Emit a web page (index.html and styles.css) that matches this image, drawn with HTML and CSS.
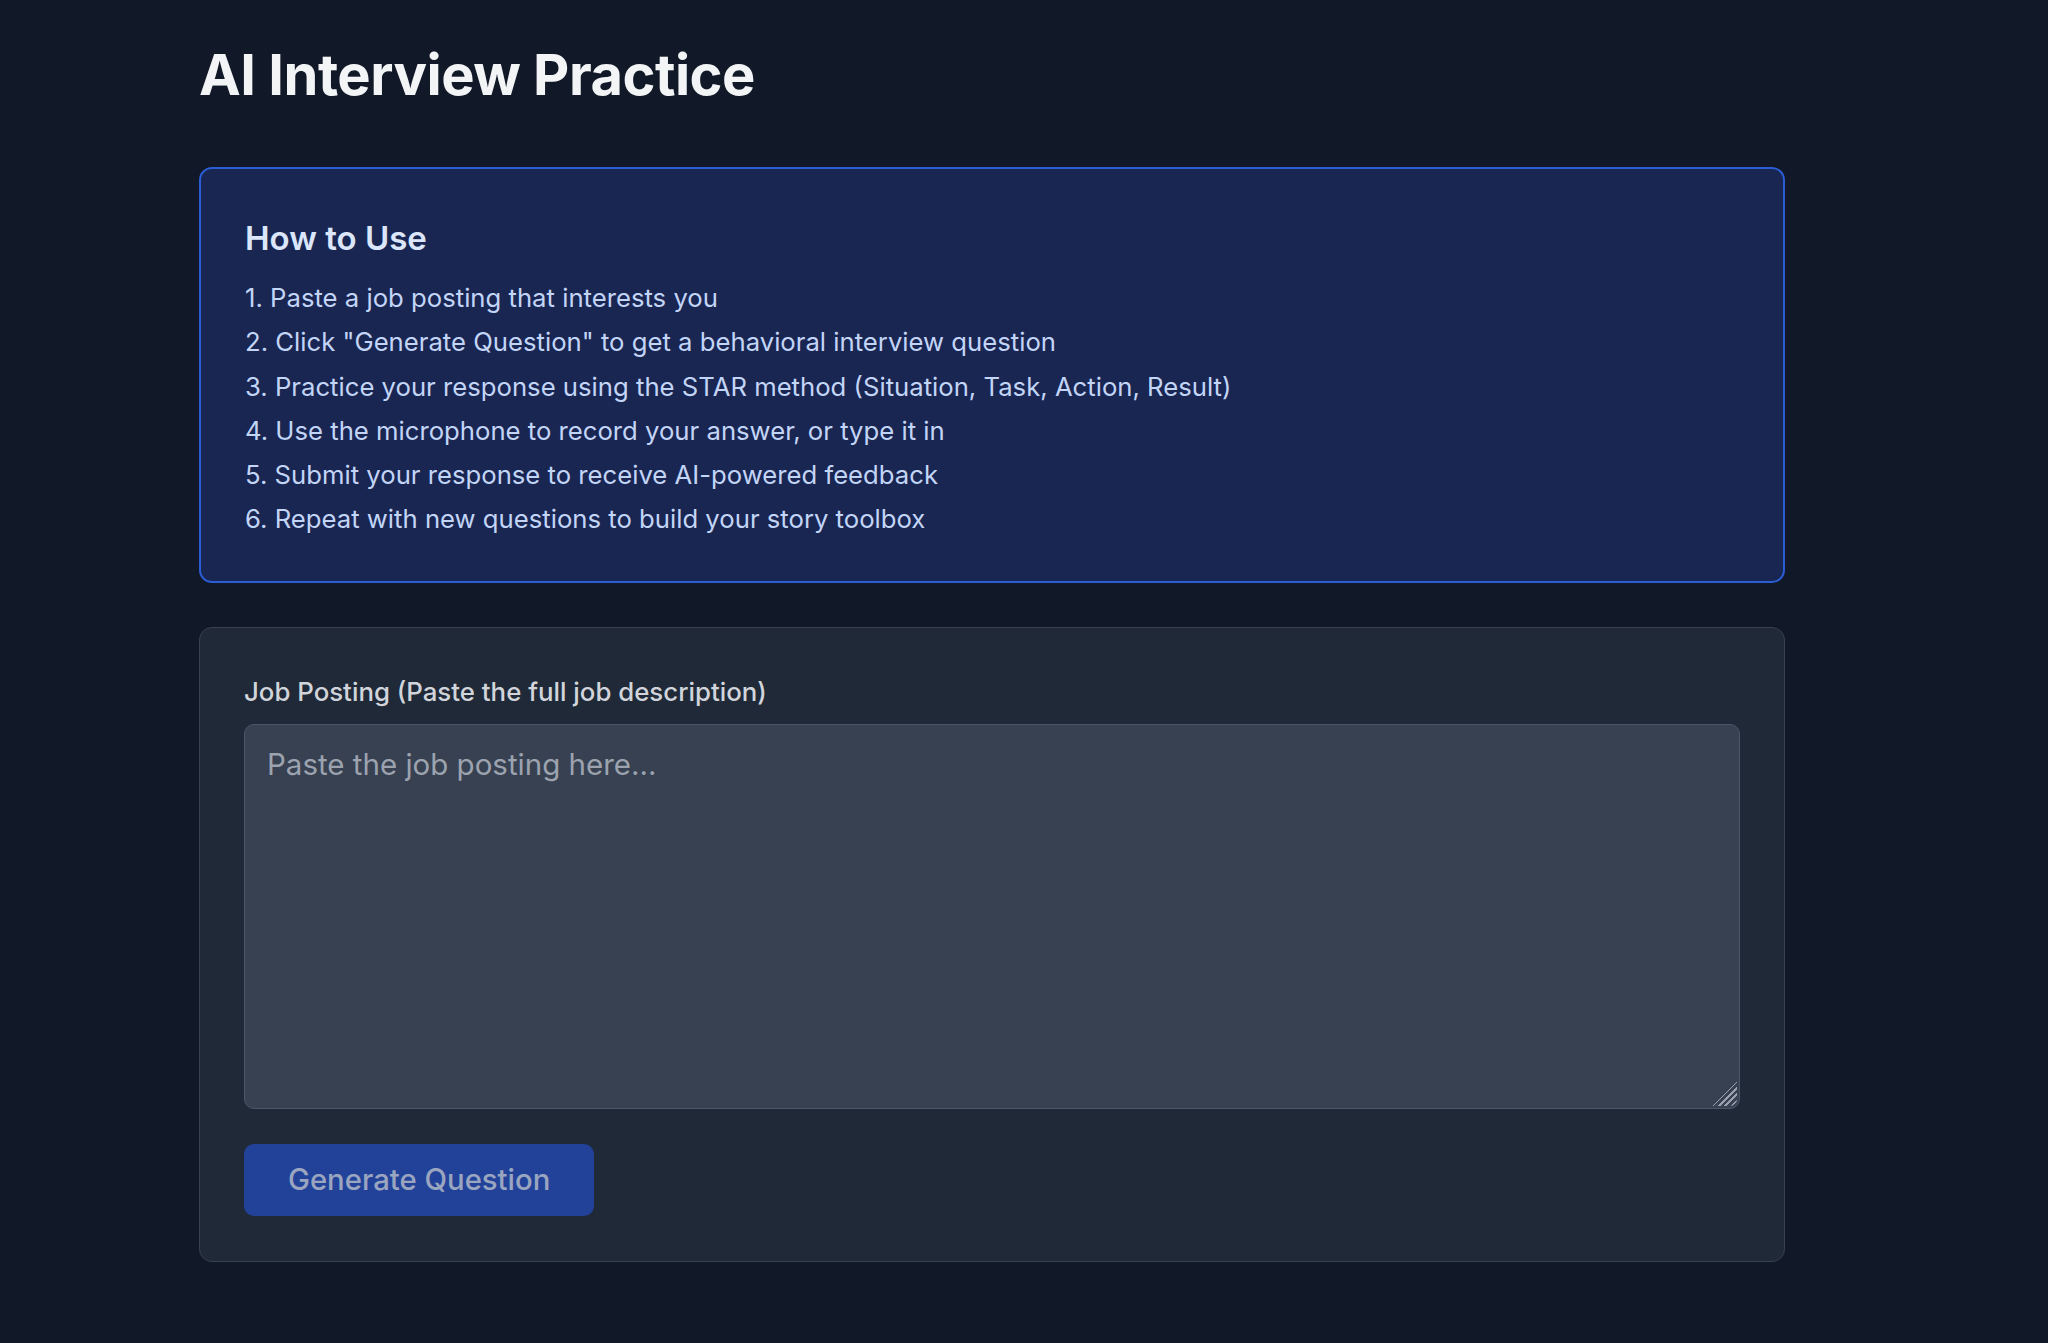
FILE: index.html
```html
<!DOCTYPE html>
<html lang="en">
<head>
<meta charset="utf-8">
<title>AI Interview Practice</title>
<link rel="stylesheet" href="styles.css">
</head>
<body>
<main class="page">
  <h1 class="title">AI Interview Practice</h1>

  <section class="howto">
    <h2 class="howto-title">How to Use</h2>
    <ol class="steps">
      <li>1. Paste a job posting that interests you</li>
      <li>2. Click "Generate Question" to get a behavioral interview question</li>
      <li>3. Practice your response using the STAR method (Situation, Task, Action, Result)</li>
      <li>4. Use the microphone to record your answer, or type it in</li>
      <li>5. Submit your response to receive AI-powered feedback</li>
      <li>6. Repeat with new questions to build your story toolbox</li>
    </ol>
  </section>

  <section class="card">
    <label class="field-label" for="job">Job Posting (Paste the full job description)</label>
    <div class="input-wrap">
      <textarea id="job" class="job-input" placeholder="Paste the job posting here..."></textarea>
    </div>
    <div class="actions">
      <button class="btn" type="button" disabled>Generate Question</button>
    </div>
  </section>
</main>
</body>
</html>
```

FILE: styles.css
```css
* { box-sizing: border-box; }

html, body {
  margin: 0;
  padding: 0;
  background: #111827;
}

body {
  font-family: Inter, "Noto Sans", "Liberation Sans", sans-serif;
  color: #e5e7eb;
}

.page {
  width: 1586px;
  margin-left: 199px;
  padding-top: 39px;
  padding-bottom: 60px;
  display: flex;
  flex-direction: column;
}

.title {
  margin: 0 0 56px 0;
  font-size: 56px;
  line-height: 72px;
  font-weight: 700;
  color: #f3f4f6;
  letter-spacing: -0.5px;
}

.howto {
  background: #192652;
  border: 2px solid #2b5dd6;
  border-radius: 13px;
  padding: 46px 44px 39px 44px;
  margin-bottom: 44px;
}

.howto-title {
  margin: 0 0 15px 0;
  font-size: 33px;
  line-height: 46px;
  font-weight: 600;
  color: #dbe6fb;
}

.steps {
  list-style: none;
  margin: 0;
  padding: 0;
}

.steps li {
  font-size: 25.7px;
  line-height: 44.3px;
  color: #c3d5f7;
}

.card {
  background: #1f2937;
  border: 1.5px solid #374151;
  border-radius: 13px;
  padding: 46px 44px 45px 44px;
  display: flex;
  flex-direction: column;
}

.field-label {
  font-size: 25.8px;
  line-height: 36px;
  font-weight: 500;
  color: #d1d5db;
  margin-bottom: 14px;
}

.input-wrap {
  position: relative;
  display: flex;
}

.input-wrap::after {
  content: "";
  position: absolute;
  right: 3px;
  bottom: 3px;
  width: 24px;
  height: 24px;
  pointer-events: none;
  border-bottom-right-radius: 7px;
  background-image:
    linear-gradient(135deg, #374151 0 50%, transparent 50%),
    repeating-linear-gradient(135deg, transparent 0 2.6px, #9aa1ad 2.6px 4.4px);
}

.job-input {
  width: 100%;
  height: 385px;
  background: #374151;
  border: 1.5px solid #4b5563;
  border-radius: 10px;
  padding: 17px 22px;
  font-family: inherit;
  font-size: 29.5px;
  line-height: 44px;
  color: #e5e7eb;
  outline: none;
  resize: none;
}

.job-input::placeholder {
  color: #9ca3af;
}

.actions {
  margin-top: 35px;
  display: flex;
}

.btn {
  height: 72px;
  padding: 0 44px;
  background: #22429a;
  border: none;
  border-radius: 10px;
  font-family: inherit;
  font-size: 29.3px;
  font-weight: 500;
  color: #9aa5c0;
  cursor: not-allowed;
}
```
